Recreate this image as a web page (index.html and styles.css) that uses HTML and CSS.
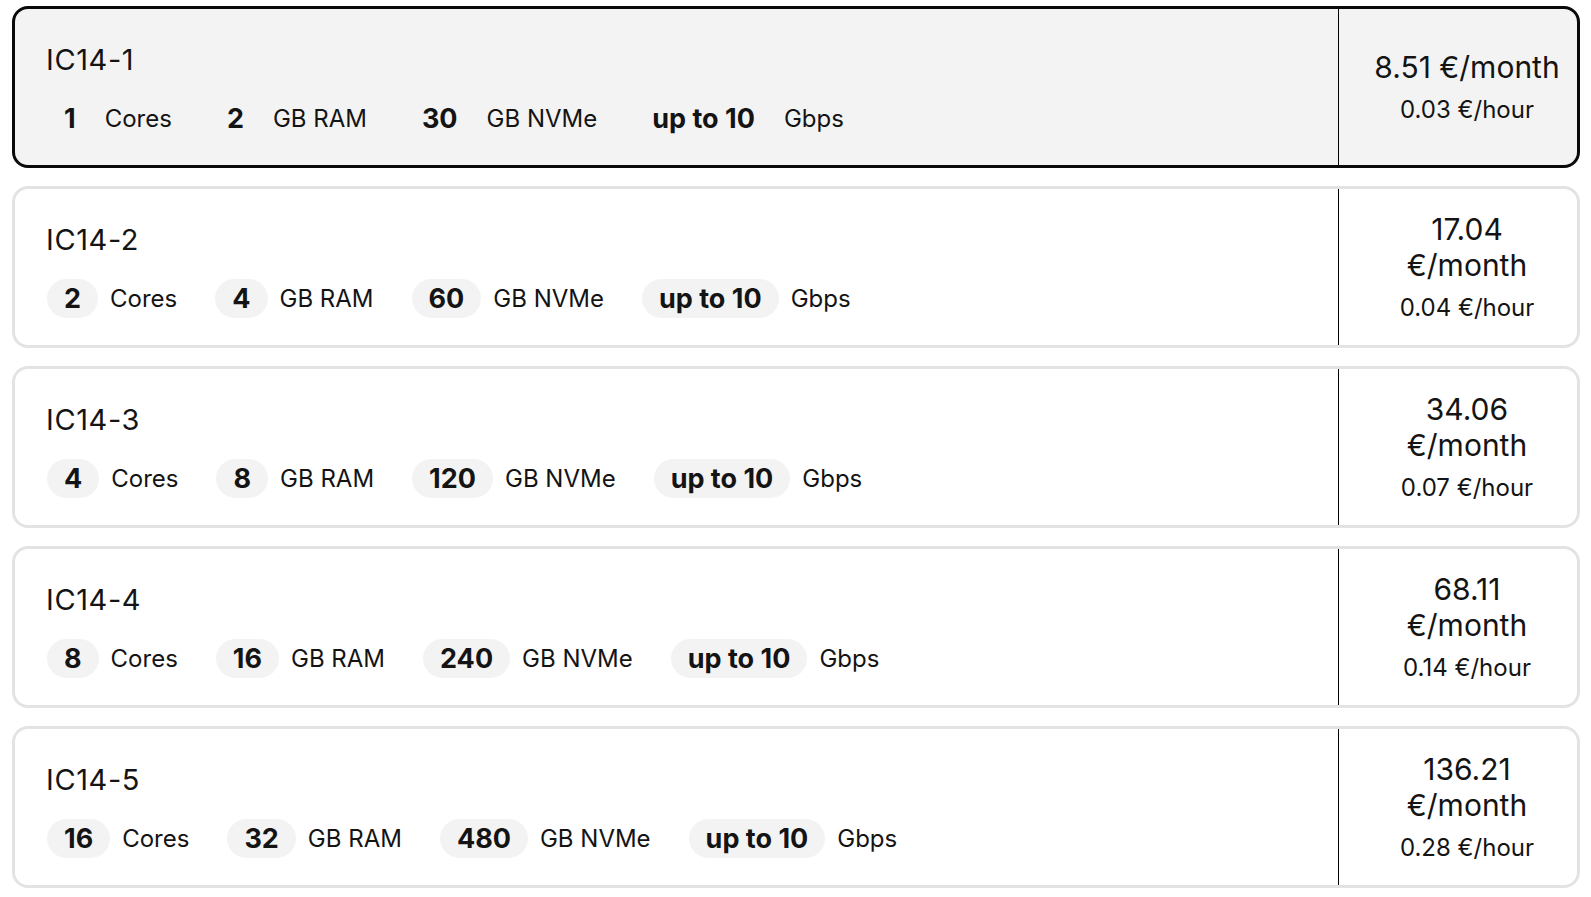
FILE: index.html
```html
<!DOCTYPE html>
<html lang="en">
<head>
<meta charset="utf-8">
<title>Plans</title>
<link rel="stylesheet" href="styles.css">
</head>
<body>
<div class="plans">
  <div class="plan plan--selected">
    <div class="plan__main">
      <div class="plan__name">IC14-1</div>
      <div class="specs">
        <div class="spec"><span class="pill">1</span><span class="label">Cores</span></div>
        <div class="spec"><span class="pill">2</span><span class="label">GB RAM</span></div>
        <div class="spec"><span class="pill">30</span><span class="label">GB NVMe</span></div>
        <div class="spec"><span class="pill">up to 10</span><span class="label">Gbps</span></div>
      </div>
    </div>
    <div class="plan__price">
      <div class="price__month">8.51 €/month</div>
      <div class="price__hour">0.03 €/hour</div>
    </div>
  </div>
  <div class="plan">
    <div class="plan__main">
      <div class="plan__name">IC14-2</div>
      <div class="specs">
        <div class="spec"><span class="pill">2</span><span class="label">Cores</span></div>
        <div class="spec"><span class="pill">4</span><span class="label">GB RAM</span></div>
        <div class="spec"><span class="pill">60</span><span class="label">GB NVMe</span></div>
        <div class="spec"><span class="pill">up to 10</span><span class="label">Gbps</span></div>
      </div>
    </div>
    <div class="plan__price">
      <div class="price__month">17.04 €/month</div>
      <div class="price__hour">0.04 €/hour</div>
    </div>
  </div>
  <div class="plan">
    <div class="plan__main">
      <div class="plan__name">IC14-3</div>
      <div class="specs">
        <div class="spec"><span class="pill">4</span><span class="label">Cores</span></div>
        <div class="spec"><span class="pill">8</span><span class="label">GB RAM</span></div>
        <div class="spec"><span class="pill">120</span><span class="label">GB NVMe</span></div>
        <div class="spec"><span class="pill">up to 10</span><span class="label">Gbps</span></div>
      </div>
    </div>
    <div class="plan__price">
      <div class="price__month">34.06 €/month</div>
      <div class="price__hour">0.07 €/hour</div>
    </div>
  </div>
  <div class="plan">
    <div class="plan__main">
      <div class="plan__name">IC14-4</div>
      <div class="specs">
        <div class="spec"><span class="pill">8</span><span class="label">Cores</span></div>
        <div class="spec"><span class="pill">16</span><span class="label">GB RAM</span></div>
        <div class="spec"><span class="pill">240</span><span class="label">GB NVMe</span></div>
        <div class="spec"><span class="pill">up to 10</span><span class="label">Gbps</span></div>
      </div>
    </div>
    <div class="plan__price">
      <div class="price__month">68.11 €/month</div>
      <div class="price__hour">0.14 €/hour</div>
    </div>
  </div>
  <div class="plan">
    <div class="plan__main">
      <div class="plan__name">IC14-5</div>
      <div class="specs">
        <div class="spec"><span class="pill">16</span><span class="label">Cores</span></div>
        <div class="spec"><span class="pill">32</span><span class="label">GB RAM</span></div>
        <div class="spec"><span class="pill">480</span><span class="label">GB NVMe</span></div>
        <div class="spec"><span class="pill">up to 10</span><span class="label">Gbps</span></div>
      </div>
    </div>
    <div class="plan__price">
      <div class="price__month">136.21 €/month</div>
      <div class="price__hour">0.28 €/hour</div>
    </div>
  </div>
</div>
</body>
</html>
```

FILE: styles.css
```css
* { box-sizing: border-box; }
html, body { margin: 0; padding: 0; background: #ffffff; }
body {
  font-family: Inter, "Noto Sans", "Liberation Sans", sans-serif;
  color: #141414;
}
.plans {
  display: flex;
  flex-direction: column;
  gap: 18px;
  padding: 6px 11px 0 12px;
}
.plan {
  display: flex;
  height: 162px;
  border: 3px solid #e3e3e3;
  border-radius: 16px;
  background: #ffffff;
  overflow: hidden;
}
.plan--selected {
  border-color: #0a0a0a;
  background: #f3f3f3;
}
.plan__main {
  flex: 1;
  display: flex;
  flex-direction: column;
  padding: 33px 0 0 32px;
}
.plan__name {
  font-size: 29px;
  line-height: 35px;
  letter-spacing: 0.6px;
  margin-left: -1px;
}
.specs {
  display: flex;
  align-items: center;
  gap: 38px;
  margin-top: 22px;
}
.spec {
  display: flex;
  align-items: center;
  gap: 12px;
}
.pill {
  display: inline-flex;
  align-items: center;
  justify-content: center;
  height: 39px;
  padding: 0 17px;
  border-radius: 20px;
  background: #f3f3f3;
  font-size: 27px;
  font-weight: 700;
}
.label {
  font-size: 24px;
}
.plan__price {
  width: 239px;
  flex: none;
  border-left: 1px solid #000000;
  display: flex;
  flex-direction: column;
  justify-content: center;
  align-items: center;
  text-align: center;
  padding: 0 15px 0 33px;
}
.price__month {
  font-size: 30px;
  line-height: 36px;
}
.price__hour {
  font-size: 24px;
  line-height: 30px;
  margin-top: 10px;
}
```
